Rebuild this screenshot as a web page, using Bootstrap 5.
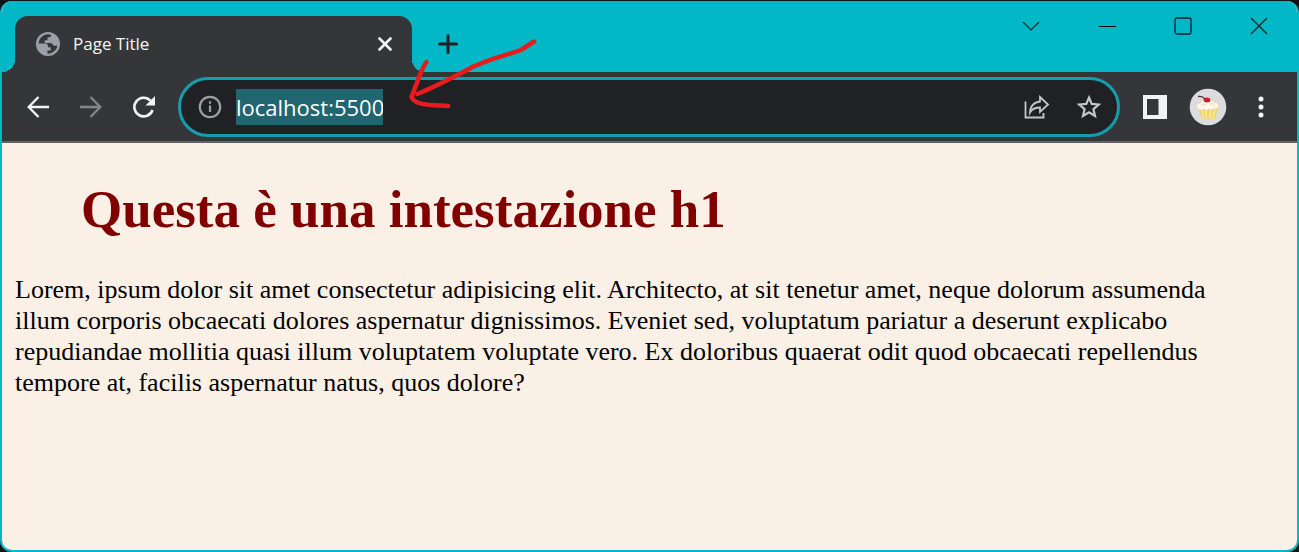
<!DOCTYPE html>
<html lang="it">
<head>
<meta charset="utf-8">
<meta name="viewport" content="width=device-width, initial-scale=1">
<title>Page Title</title>
<link href="https://cdn.jsdelivr.net/npm/bootstrap@5.3.0/dist/css/bootstrap.min.css" rel="stylesheet">
<style>
  :root { --frame: #02b7c6; --chrome: #35363a; --field: #202124; --ring: #159cad; --paper: #faf0e6; }
  body { background: #101418; font-family: "Open Sans", sans-serif; }
  .desktop { padding-top: 1px; }
  .browser { border: 2px solid var(--frame); border-top-width: 0; border-radius: 12px; background: var(--paper); overflow: hidden; }
  .titlebar { background: var(--frame); height: 71px; padding-left: 13px; }
  .page-tab { width: 397px; height: 56px; background: var(--chrome); border-radius: 13px 13px 0 0; color: #f5f5f5; font-size: 17px; padding: 0 14px 0 20px; }
  .page-tab::before, .page-tab::after { content: ""; position: absolute; bottom: 0; width: 13px; height: 13px; }
  .page-tab::before { right: 100%; background: radial-gradient(circle at 0 0, transparent 13px, var(--chrome) 13px); }
  .page-tab::after { left: 100%; background: radial-gradient(circle at 100% 0, transparent 13px, var(--chrome) 13px); }
  .tool { border: 0; padding: 0; background: none; color: #f1f3f4; display: inline-flex; align-items: center; justify-content: center; flex: none; }
  .tab-tool { width: 26px; height: 26px; }
  .new-tab { width: 32px; height: 56px; margin-left: 20px; color: #202124; }
  .win-tool { width: 76px; height: 50px; color: #0b2326; }
  .bar-tool { width: 53px; height: 53px; }
  .toolbar { background: var(--chrome); height: 71px; border-bottom: 2px solid #626367; padding: 0 10px 0 9px; }
  .omnibox { height: 60px; border: 3px solid var(--ring); border-radius: 30px; background: var(--field); margin: 0 8px; padding: 0 2px 0 16px; }
  .omnibox .bar-tool { width: 52px; color: #c4c7ca; }
  .info { width: 26px; margin-right: 13px; }
  .omnibox .info { color: #9aa0a6; }
  .address { width: 147px; height: 36px; border: 0; padding: 0; background: #20656f; color: #fff; font-size: 22px; outline: 0; }
  .note { left: 400px; top: 30px; pointer-events: none; }
  .site { font-family: "Liberation Serif", "Times New Roman", serif; color: #000; padding: 0 40px 0 13px; }
  .site h1 { color: #800000; font-size: 53px; line-height: 62px; font-weight: 700; margin: 35px 0 0 66px; }
  .site p { font-size: 26px; line-height: 31px; margin: 34px 0 0; }
</style>
</head>
<body>
<div class="desktop min-vh-100 d-flex">
  <div class="browser flex-grow-1 position-relative">
    <header>
      <div class="titlebar d-flex">
        <div class="page-tab position-relative d-flex align-items-center align-self-end">
          <svg width="26" height="26" viewBox="0 0 24 24" fill="#9aa0a6" aria-hidden="true"><circle cx="12" cy="12" r="10" fill="none" stroke="#9aa0a6" stroke-width="2.200"/><path d="M2 11.500h7.500c2.500 0 2.500 2 2.500 3.500h2.500v3H11.500v4A10 10 0 0 1 2 11.500zM12 2h3v1.500c0 2-1 2.500-3.500 2.500v2.500H9V11h5c2 0 2.500 2 3.500 2.500H22A10 10 0 0 0 15 2z"/></svg>
          <span class="ms-2 ps-1 flex-grow-1">Page Title</span>
          <button class="tool tab-tool" type="button" aria-label="Chiudi scheda"><svg width="14" height="14" viewBox="0 0 14 14" stroke="currentColor" stroke-width="2.600" stroke-linecap="round"><path d="M1.500 1.500l11 11M12.500 1.500l-11 11"/></svg></button>
        </div>
        <button class="tool new-tab align-self-end" type="button" aria-label="Nuova scheda"><svg width="20" height="20" viewBox="0 0 20 20" stroke="currentColor" stroke-width="3" stroke-linecap="round"><path d="M10 1.500v17M1.500 10h17"/></svg></button>
        <div class="ms-auto d-flex">
          <button class="tool win-tool" type="button" aria-label="Cerca schede"><svg width="18" height="10" viewBox="0 0 18 10" fill="none" stroke="currentColor" stroke-width="1.200"><path d="M1 1l8 8 8-8"/></svg></button>
          <button class="tool win-tool" type="button" aria-label="Riduci"><svg width="17" height="1" viewBox="0 0 17 1"><path d="M0 0h17v1H0z"/></svg></button>
          <button class="tool win-tool" type="button" aria-label="Ingrandisci"><svg width="18" height="18" viewBox="0 0 18 18" fill="none" stroke="currentColor" stroke-width="1.300"><rect x="1" y="1" width="16" height="16" rx="2"/></svg></button>
          <button class="tool win-tool" type="button" aria-label="Chiudi"><svg width="18" height="18" viewBox="0 0 18 18" stroke="currentColor" stroke-width="1.300"><path d="M1 1l16 16M17 1L1 17"/></svg></button>
        </div>
      </div>
      <div class="toolbar d-flex align-items-center">
        <button class="tool bar-tool" type="button" aria-label="Indietro"><svg width="22" height="22" viewBox="0 0 22 22" fill="none" stroke="currentColor" stroke-width="2.300"><path d="M22 11H2M11.500 1L1.700 11l9.800 10"/></svg></button>
        <button class="tool bar-tool" type="button" aria-label="Avanti"><svg width="22" height="22" viewBox="0 0 22 22" fill="none" stroke="#85868a" stroke-width="2.300"><path d="M0 11h20M10.500 1l9.800 10-9.800 10"/></svg></button>
        <button class="tool bar-tool" type="button" aria-label="Ricarica"><svg width="24" height="22" viewBox="0 0 24 22" fill="none" stroke="currentColor" stroke-width="2.600"><path d="M20.500 14a9.300 9.300 0 1 1-2-9.300"/><path d="M23 0v9.500h-9.500z" fill="currentColor" stroke="none"/></svg></button>
        <div class="omnibox d-flex align-items-center flex-grow-1">
          <button class="tool info" type="button" aria-label="Informazioni sul sito"><svg width="24" height="24" viewBox="0 0 24 24" fill="none" stroke="currentColor" stroke-width="2.200"><circle cx="12" cy="12" r="10.200"/><path d="M12 10.500v6.500M12 6.200v2.600"/></svg></button>
          <input class="address" type="text" value="localhost:5500" aria-label="Indirizzo" spellcheck="false">
          <button class="tool bar-tool ms-auto" type="button" aria-label="Condividi"><svg width="26" height="24" viewBox="0 0 26 24" fill="none" stroke="currentColor" stroke-width="1.800"><path d="M1.500 6.500v16h18V18"/><path d="M16 2l8 7.500-8 7.500v-4.500c-5 0-8 1.500-10 5 0-6 4-10.500 10-11z"/></svg></button>
          <button class="tool bar-tool" type="button" aria-label="Aggiungi ai preferiti"><svg width="26" height="26" viewBox="0 0 26 26" fill="none" stroke="currentColor" stroke-width="2.200"><path d="M13 3.500l2.700 6.400 7 .6-5.300 4.600 1.600 6.900-6-3.700-6 3.700 1.600-6.900-5.300-4.600 7-.6z"/></svg></button>
        </div>
        <button class="tool bar-tool" type="button" aria-label="Riquadro laterale"><svg width="24" height="24" viewBox="0 0 24 24"><path d="M0 0h24v24H0zM4 4v16h11.500V4z" fill="#f1f3f4" fill-rule="evenodd"/></svg></button>
        <button class="tool bar-tool" type="button" aria-label="Profilo"><svg width="38" height="38" viewBox="0 0 38 38"><circle cx="19" cy="19" r="18.300" fill="#dcdcde"/><path d="M9.500 20h20l-3.500 10q-6.500 3-13 0z" fill="#f5d266"/><path d="M13 21l1.500 9M17 22l.6 9M21.500 22l-.5 9M26 21l-2 9" stroke="#fff0a8" stroke-width="1.200"/><path d="M8 20c-2-3 1-5 3-5 1-3 4-4 6-3 4-1 7 0 8 2 4 0 6 3 4 5.500-1 2-3 2-4 1-1 2-4 2-5 .8-2 1.600-4 1.200-5 0-3 1.500-6 1-7-1.300z" fill="#fff7e9" stroke="#e5c9a7" stroke-width=".8"/><path d="M16 11c-2-2.500-4-3-7-2.500" fill="none" stroke="#49322e" stroke-width="1.300"/><ellipse cx="18" cy="12" rx="3.400" ry="2.500" fill="#cc2028"/><path d="M12 17q3-2 5 0M21 16q3-1 4 1" fill="none" stroke="#ecd5b8"/></svg></button>
        <button class="tool bar-tool" type="button" aria-label="Menu"><svg width="6" height="22" viewBox="0 0 6 22" fill="currentColor"><circle cx="3" cy="3" r="2.500"/><circle cx="3" cy="11" r="2.500"/><circle cx="3" cy="19" r="2.500"/></svg></button>
      </div>
    </header>
    <svg class="note position-absolute" width="150" height="90" viewBox="402 31 150 90" fill="none" stroke="#e81c1c" stroke-width="4.500" stroke-linecap="round" stroke-linejoin="round" aria-hidden="true"><path d="M534 41.500L521 50C501 57 484 60 465 71C448 80 434 87 417.500 94"/><path d="M426.500 62C420 71 417 84 411.500 97C415 106 434 105 448 106"/></svg>
    <main class="site">
      <h1>Questa è una intestazione h1</h1>
      <p>Lorem, ipsum dolor sit amet consectetur adipisicing elit. Architecto, at sit tenetur amet, neque dolorum assumenda illum corporis obcaecati dolores aspernatur dignissimos. Eveniet sed, voluptatum pariatur a deserunt explicabo repudiandae mollitia quasi illum voluptatem voluptate vero. Ex doloribus quaerat odit quod obcaecati repellendus tempore at, facilis aspernatur natus, quos dolore?</p>
    </main>
  </div>
</div>
<script src="https://cdn.jsdelivr.net/npm/bootstrap@5.3.0/dist/js/bootstrap.bundle.min.js"></script>
</body>
</html>
